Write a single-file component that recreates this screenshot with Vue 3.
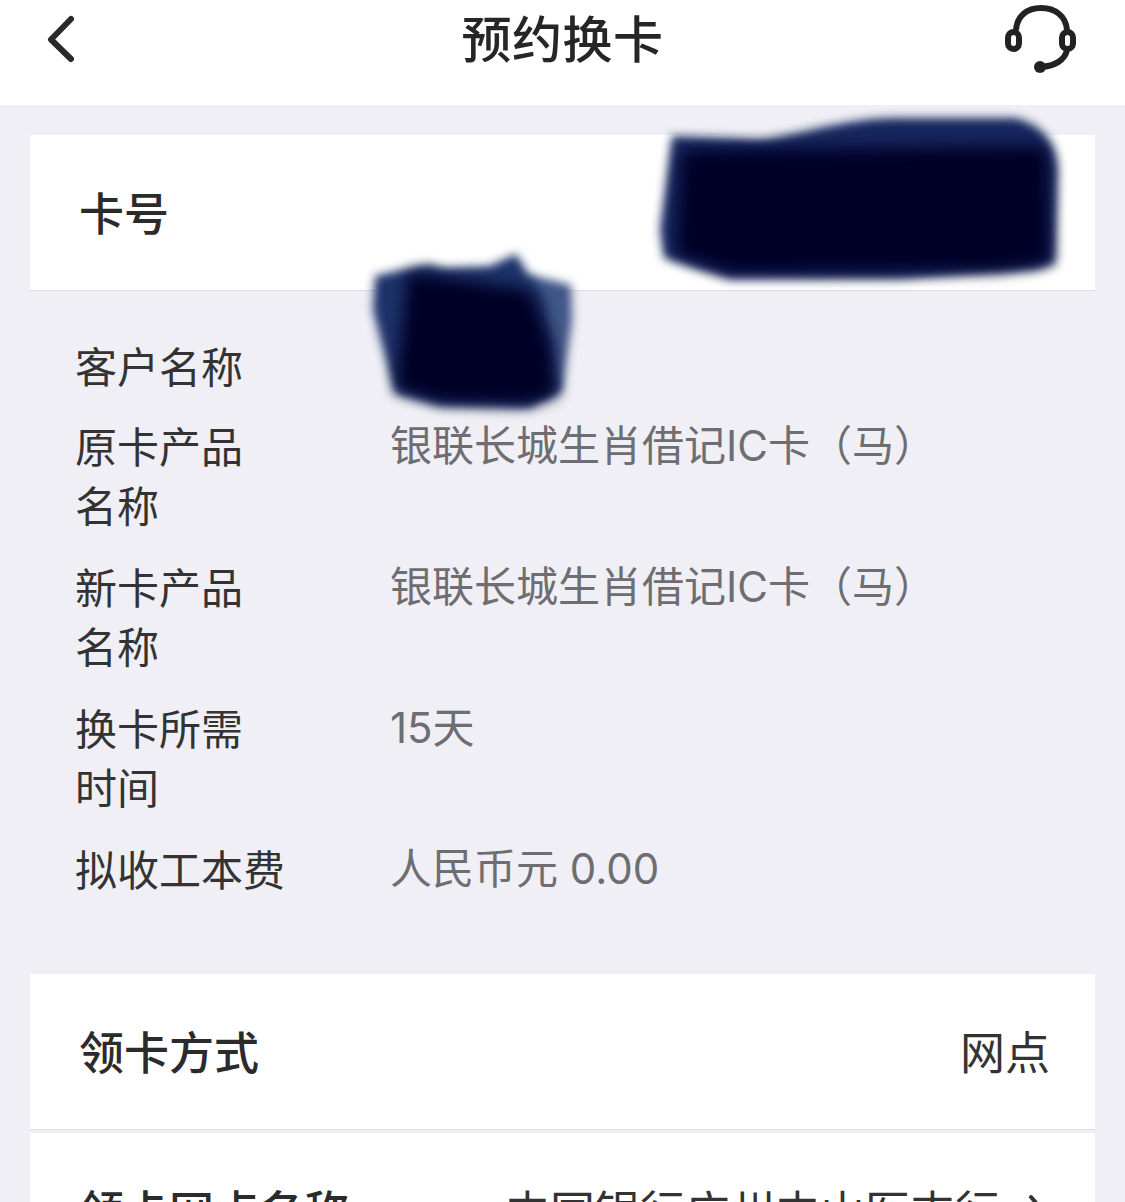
<script setup>
const details = [
  { label: ['客户名称'], value: '' },
  { label: ['原卡产品', '名称'], value: '银联长城生肖借记IC卡（马）' },
  { label: ['新卡产品', '名称'], value: '银联长城生肖借记IC卡（马）' },
  { label: ['换卡所需', '时间'], value: '15天' },
  { label: ['拟收工本费'], value: '人民币元 0.00' },
]
</script>

<template>
  <div class="page">
    <header class="topbar">
      <svg class="back" viewBox="0 0 34 50" fill="none">
        <path d="M25 4 L5 24.5 L25 44" stroke="#2a2a2a" stroke-width="6" stroke-linecap="round" stroke-linejoin="round" />
      </svg>
      <h1 class="title">预约换卡</h1>
      <svg class="service" viewBox="0 0 76 76" fill="none" stroke="#222" stroke-width="6">
        <path d="M13 30 C14 16 24 8 38 8 C52 8 63 16 64 30" />
        <rect x="5" y="32" width="11" height="17" rx="5.5" />
        <rect x="59" y="32" width="11" height="17" rx="5.5" />
        <path d="M64 50 C62 60 52 66 38 67" />
        <circle cx="37" cy="67" r="6" fill="#222" stroke="none" />
      </svg>
    </header>

    <section class="card">
      <div class="row row-line">
        <span class="row-label">卡号</span>
      </div>
    </section>

    <section class="details">
      <div v-for="item in details" :key="item.label[0]" class="detail">
        <div class="detail-label">
          <div v-for="line in item.label" :key="line">{{ line }}</div>
        </div>
        <div class="detail-value">{{ item.value }}</div>
      </div>
    </section>

    <section class="card">
      <div class="row row-line">
        <span class="row-label">领卡方式</span>
        <span class="row-value">网点</span>
      </div>
    </section>
    <section class="card card-next">
      <div class="row">
        <span class="row-label">领卡网点名称</span>
        <span class="row-value">中国银行广州中山医支行</span>
        <svg class="chevron" viewBox="0 0 20 40" fill="none">
          <path d="M3 4 L16 19 L3 34" stroke="#333" stroke-width="4" stroke-linecap="round" stroke-linejoin="round" />
        </svg>
      </div>
    </section>

    <svg class="scribble" viewBox="0 0 1125 1202">
      <defs>
        <filter id="soft-a" x="-20%" y="-20%" width="140%" height="140%"><feGaussianBlur stdDeviation="5" /></filter>
        <filter id="soft-b" x="-20%" y="-20%" width="140%" height="140%"><feGaussianBlur stdDeviation="8" /></filter>
      </defs>
      <path filter="url(#soft-a)" fill="#12285f" d="M672 136 L760 139 C800 135 850 117 900 118 L1015 118 C1042 124 1056 142 1058 170 L1055 264 L1035 270 L900 279 L730 279 L700 270 L664 258 L660 230 Z" />
      <path filter="url(#soft-b)" fill="#000428" d="M682 150 L1047 146 L1050 262 L1000 270 L730 272 L676 254 Z" />
      <path filter="url(#soft-a)" fill="#3f5488" d="M530 275 L571 285 L572 320 L562 392 L520 400 L500 300 Z" />
      <path filter="url(#soft-a)" fill="#1e3369" d="M375 276 L428 264 L445 268 L490 266 L516 254 L532 280 L545 300 L558 392 L530 408 L440 406 L395 394 L382 345 L373 310 Z" />
      <path filter="url(#soft-b)" fill="#000428" d="M408 272 L530 290 L552 345 L556 396 L525 404 L440 402 L396 388 Z" />
    </svg>
  </div>
</template>

<style scoped>
.page {
  position: relative;
  width: 1125px;
  height: 1202px;
  overflow: hidden;
  background: #efeff5;
  font-family: Inter, "Noto Sans CJK SC", sans-serif;
  color: #2b2b2b;
}

.topbar {
  height: 105px;
  background: #fff;
  display: grid;
  grid-template-columns: 1fr auto 1fr;
  align-items: start;
  padding: 0 46px;
  margin-bottom: 30px;
}

.back {
  width: 34px;
  height: 50px;
  margin-top: 15px;
}

.title {
  margin: 10px 0 0;
  font-size: 50px;
  line-height: 60px;
  font-weight: 500;
  letter-spacing: 0.5px;
  color: #262626;
}

.service {
  width: 76px;
  height: 76px;
  justify-self: end;
}

.card {
  margin: 0 30px;
  background: #fff;
}

.card-next {
  margin-top: 3px;
}

.row {
  height: 155px;
  box-sizing: content-box;
  display: flex;
  align-items: center;
  padding: 0 45px 0 49px;
  font-size: 45px;
  line-height: 60px;
}

.row-line {
  border-bottom: 1px solid #dcdce4;
}

.row-label {
  flex: 1;
  font-weight: 500;
  margin-top: 4px;
}

.row-value {
  color: #333;
  margin-top: 4px;
}

.chevron {
  width: 20px;
  height: 40px;
  margin: 4px 2px 0 28px;
}

.details {
  padding: 47px 46px 74px 75px;
  display: flex;
  flex-direction: column;
  gap: 23px;
  font-size: 42px;
  line-height: 59px;
}

.detail {
  display: grid;
  grid-template-columns: 214px 1fr;
  column-gap: 101px;
}

.detail:first-child {
  margin-bottom: -2px;
}

.detail-label {
  color: #333;
  white-space: nowrap;
}

.detail-value {
  color: #6d6d72;
  margin-top: -2px;
}

.scribble {
  position: absolute;
  left: 0;
  top: 0;
  width: 1125px;
  height: 1202px;
  pointer-events: none;
}
</style>

<style>
html,
body {
  margin: 0;
  overflow: hidden;
}
</style>
